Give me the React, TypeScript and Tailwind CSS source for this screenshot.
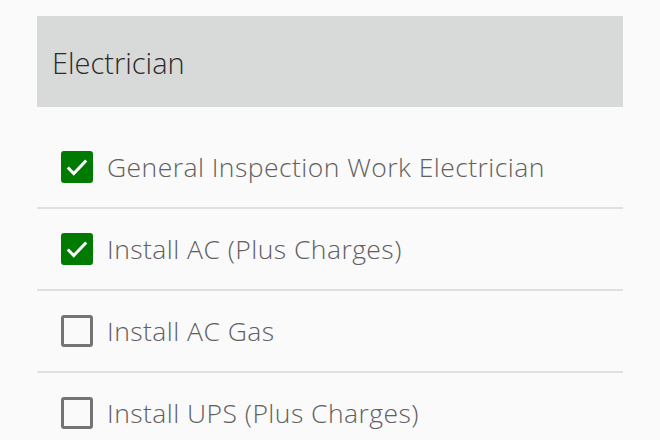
const items = [
  { label: "General Inspection Work Electrician", checked: true },
  { label: "Install AC (Plus Charges)", checked: true },
  { label: "Install AC Gas", checked: false },
  { label: "Install UPS (Plus Charges)", checked: false },
];

function Check({ checked }: { checked: boolean }) {
  if (checked) {
    return (
      <div className="w-8 h-8 rounded-[3px] bg-[#007a00] flex items-center justify-center shrink-0">
        <svg width="26" height="26" viewBox="0 0 24 24" fill="none">
          <path d="M3.5 12.5l5.5 5.5L20.5 6" stroke="#fff" strokeWidth="2.8" />
        </svg>
      </div>
    );
  }
  return <div className="w-8 h-8 rounded-[3px] border-[3px] border-[#747474] shrink-0" />;
}

export default function App() {
  return (
    <div className="w-[660px] h-[440px] overflow-hidden bg-[#fafafa] font-['Open_Sans',sans-serif]">
      <div className="pt-4 px-[37px]">
        <div className="h-[91px] bg-[#d8d9d9] flex items-center px-[15px]">
          <span className="text-[29px] font-light text-[#2b2b2b] leading-none mt-[1px]">Electrician</span>
        </div>
        <div className="mt-[20px]">
          {items.map((it) => (
            <div key={it.label} className="h-[82px] flex items-center gap-[14px] pl-6 border-b-2 border-[#e0e0e0]">
              <Check checked={it.checked} />
              <span className="text-[26.5px] font-light text-[#606060] tracking-[0.45px] leading-none">{it.label}</span>
            </div>
          ))}
        </div>
      </div>
    </div>
  );
}
